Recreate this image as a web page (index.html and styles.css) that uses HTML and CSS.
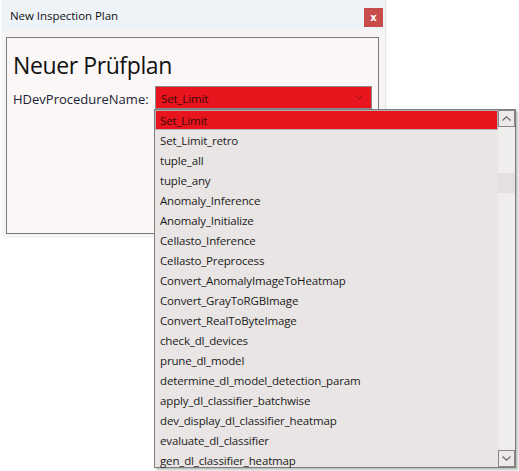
FILE: index.html
```html
<!DOCTYPE html>
<html>
<head>
<meta charset="utf-8">
<link rel="stylesheet" href="styles.css">
</head>
<body>
<div class="window">
  <div class="titlebar">
    <span class="title">New Inspection Plan</span>
    <span class="close">x</span>
  </div>
  <div class="content">
    <h1 class="heading">Neuer Prüfplan</h1>
    <div class="row">
      <span class="label">HDevProcedureName:</span>
      <div class="combo">
        <span class="combo-value">Set_Limit</span>
        <svg class="chev" width="8" height="5" viewBox="0 0 8 5"><path d="M0.5 0.5 L4 4 L7.5 0.5" fill="none" stroke="#8a1a1a" stroke-width="1"/></svg>
      </div>
    </div>
  </div>
</div>
<div class="dropdown">
  <ul class="list">
    <li class="item selected">Set_Limit</li>
    <li class="item">Set_Limit_retro</li>
    <li class="item">tuple_all</li>
    <li class="item">tuple_any</li>
    <li class="item">Anomaly_Inference</li>
    <li class="item">Anomaly_Initialize</li>
    <li class="item">Cellasto_Inference</li>
    <li class="item">Cellasto_Preprocess</li>
    <li class="item">Convert_AnomalyImageToHeatmap</li>
    <li class="item">Convert_GrayToRGBImage</li>
    <li class="item">Convert_RealToByteImage</li>
    <li class="item">check_dl_devices</li>
    <li class="item">prune_dl_model</li>
    <li class="item">determine_dl_model_detection_param</li>
    <li class="item">apply_dl_classifier_batchwise</li>
    <li class="item">dev_display_dl_classifier_heatmap</li>
    <li class="item">evaluate_dl_classifier</li>
    <li class="item">gen_dl_classifier_heatmap</li>
  </ul>
  <div class="scrollbar">
    <div class="sb-btn"><svg width="9" height="5" viewBox="0 0 9 5"><path d="M0.5 4.5 L4.5 0.8 L8.5 4.5" fill="none" stroke="#666" stroke-width="1.2"/></svg></div>
    <div class="sb-track">
      <div class="sb-thumb"></div>
    </div>
    <div class="sb-btn"><svg width="9" height="5" viewBox="0 0 9 5"><path d="M0.5 0.5 L4.5 4.2 L8.5 0.5" fill="none" stroke="#666" stroke-width="1.2"/></svg></div>
  </div>
</div>
</body>
</html>
```

FILE: styles.css
```css
html, body {
  margin: 0;
  padding: 0;
  background: #ffffff;
}
body {
  font-family: "Open Sans", "Noto Sans", sans-serif;
  color: #1b1b1b;
  position: relative;
  width: 519px;
  height: 471px;
  overflow: hidden;
}
.window {
  margin-left: 2px;
  width: 383px;
  height: 236px;
  background: #f7f5f4;
  box-shadow: 0 1px 2px rgba(0,0,0,0.08);
  border-right: 1px solid #e6e6e6;
}
.titlebar {
  height: 30px;
  background: #eef3f8;
  display: flex;
  align-items: center;
  justify-content: space-between;
  padding: 0 2px 0 8px;
}
.title {
  font-size: 11.5px;
  color: #111;
  letter-spacing: -0.05px;
  margin-top: 1px;
}
.close {
  width: 19px;
  height: 19px;
  margin-top: 5px;
  background: #c94c4c;
  color: #fff;
  font-family: "DejaVu Sans", sans-serif;
  font-weight: bold;
  font-size: 10px;
  display: flex;
  align-items: center;
  justify-content: center;
}
.content {
  margin: 7px 6px 0 4px;
  height: 195px;
  border: 1px solid #7a7a7a;
  background: #faf7f6;
  padding: 0 6px;
}
.heading {
  margin: 11px 0 0 0;
  font-weight: normal;
  font-size: 23px;
  line-height: 32px;
  color: #111;
  letter-spacing: -0.4px;
}
.row {
  display: flex;
  align-items: center;
  margin-top: 5px;
}
.label {
  font-size: 13px;
  color: #1a2436;
  width: 142px;
  flex-shrink: 0;
  padding-top: 3px;
}
.combo {
  height: 21px;
  border: 1px solid #8a8a8a;
  background: #e8141e;
  display: flex;
  align-items: center;
  justify-content: space-between;
  padding: 0 8px 0 5px;
  width: 204px;
}
.combo-value {
  font-size: 11.5px;
  color: #3a0a0a;
  letter-spacing: -0.15px;
  padding-top: 2px;
}
.chev {
  display: block;
}
.dropdown {
  position: absolute;
  left: 154px;
  top: 109px;
  width: 360px;
  height: 357px;
  border: 1px solid #7d7d7d;
  background: #e9e5e4;
  display: flex;
  box-shadow: 2px 2px 2px rgba(0,0,0,0.25);
}
.list {
  list-style: none;
  margin: 0;
  padding: 0;
  flex: 1;
}
.item {
  height: 20px;
  line-height: 22px;
  font-size: 11.5px;
  letter-spacing: -0.15px;
  padding-left: 5px;
  color: #1b1b1b;
  white-space: nowrap;
  box-sizing: border-box;
}
.item.selected {
  background: #e8141e;
  border: 1px solid #b0b0b0;
  line-height: 20px;
  padding-left: 4px;
  color: #3a0a0a;
}
.scrollbar {
  width: 17px;
  display: flex;
  flex-direction: column;
  background: #f0eeed;
}
.sb-btn {
  border: 1px solid #888;
  background: #ece9e8;
  display: flex;
  align-items: center;
  justify-content: center;
  box-sizing: border-box;
  height: 17px;
}
.sb-track {
  flex: 1;
  padding-top: 46px;
}
.sb-thumb {
  height: 20px;
  background: #e3e0df;
}
```
